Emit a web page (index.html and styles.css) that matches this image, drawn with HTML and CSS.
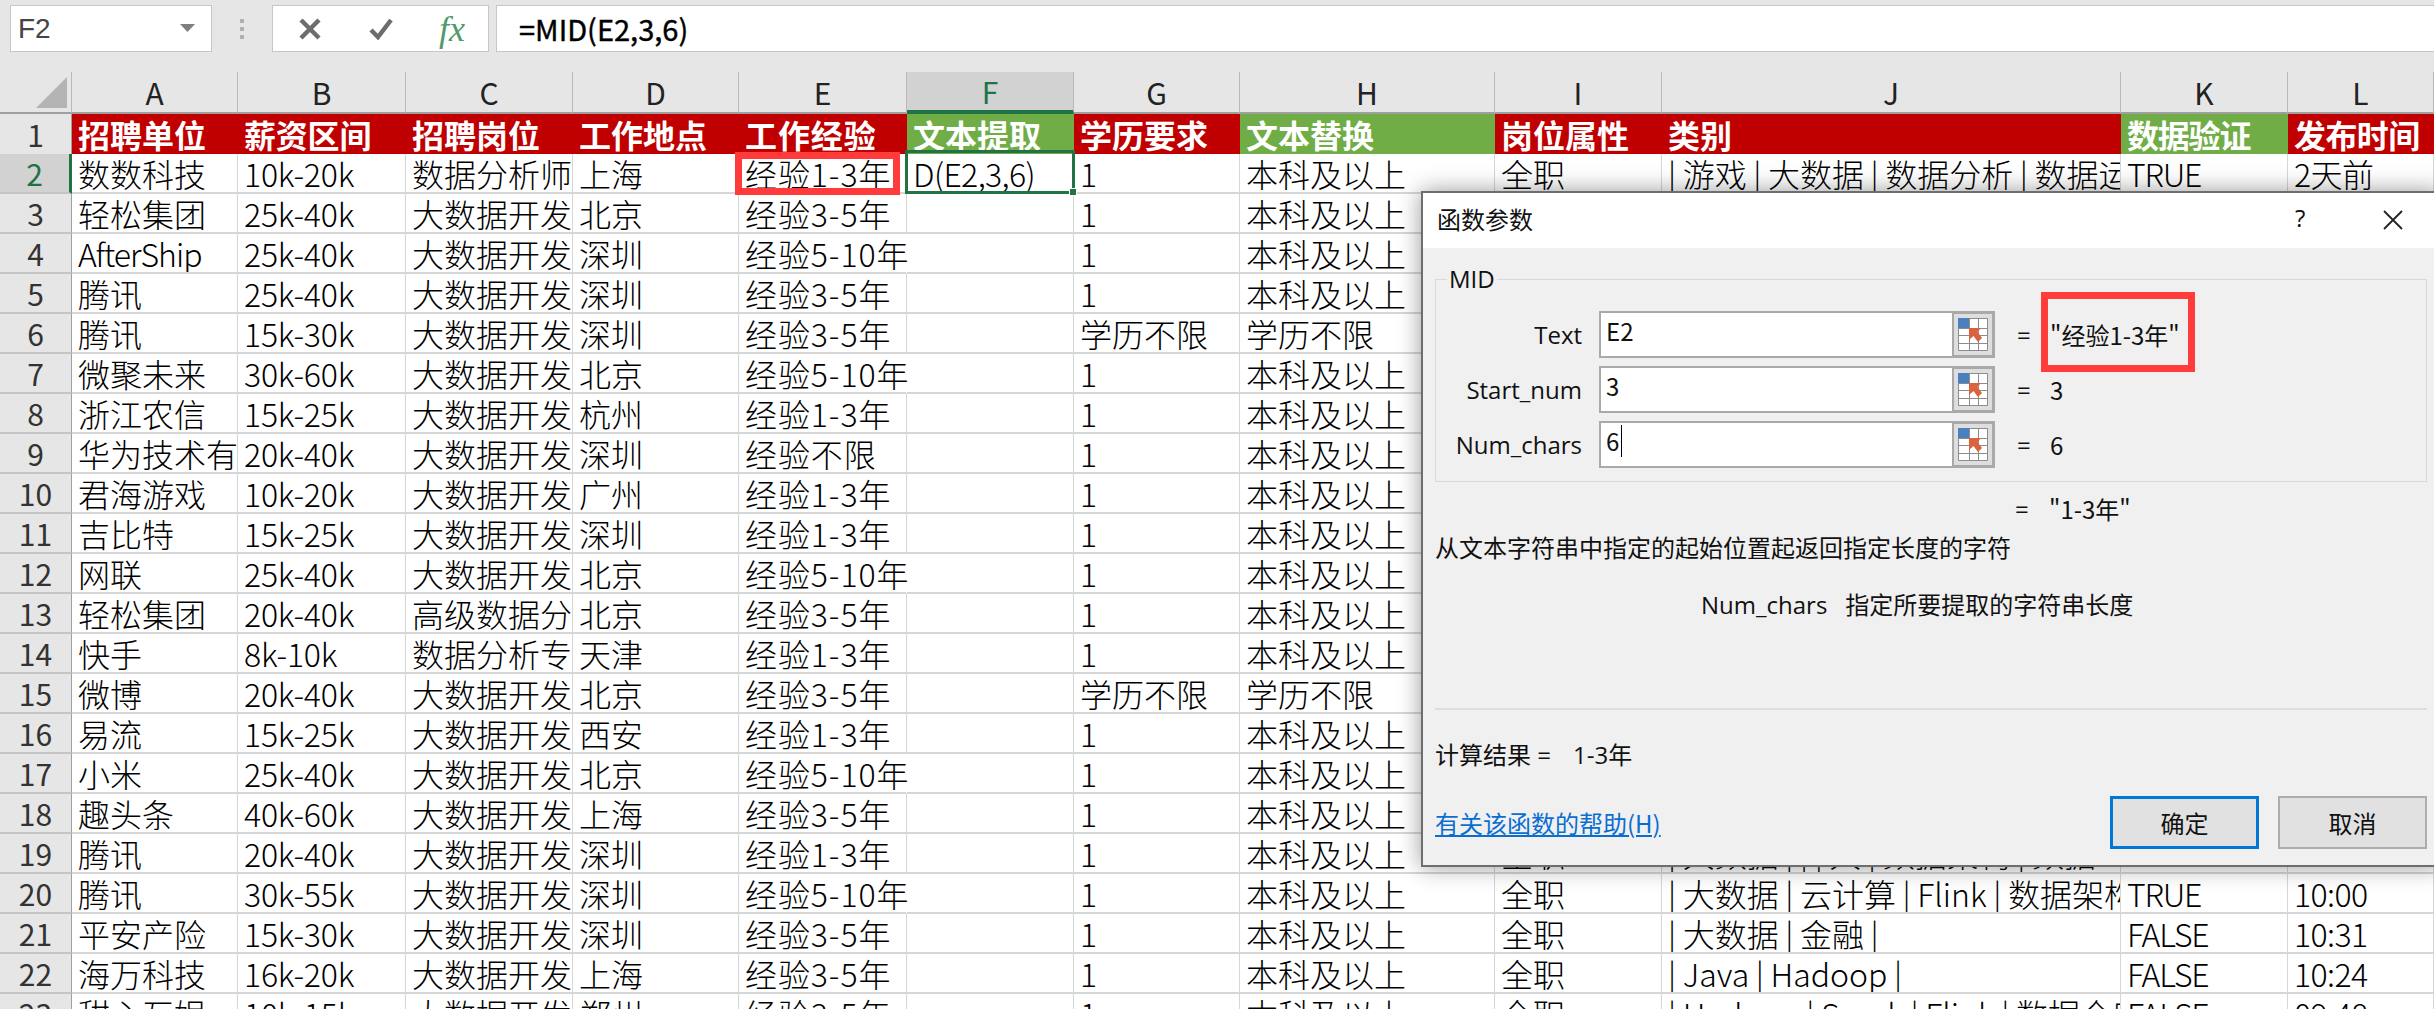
FILE: index.html
```html
<!DOCTYPE html>
<html lang="zh">
<head>
<meta charset="utf-8">
<title>Excel MID</title>
<link rel="stylesheet" href="styles.css">
</head>
<body>
<div class="app">
  <div class="fbar">
    <div class="namebox"><span>F2</span><svg class="caret" width="22" height="12" viewBox="0 0 22 12"><path d="M0 1H15L7.500 9Z" fill="#7f7f7f"/></svg></div>
    <div class="dots"><i></i><i></i><i></i></div>
    <div class="fbtns">
      <svg width="24" height="22" viewBox="0 0 24 22"><path d="M3 2L21 20M21 2L3 20" stroke="#6d6d6d" stroke-width="4.500" fill="none"/></svg>
      <svg width="26" height="22" viewBox="0 0 26 22"><path d="M3 12L10 19L23 2" stroke="#6d6d6d" stroke-width="4.500" fill="none"/></svg>
      <span class="fx">fx</span>
    </div>
    <div class="finput">=MID(E2,3,6)</div>
  </div>
  <div class="sheet">
    <table class="grid">
      <colgroup>
        <col class="w-r"><col class="w-a"><col class="w-b"><col class="w-c"><col class="w-d"><col class="w-e"><col class="w-f"><col class="w-g"><col class="w-h"><col class="w-i"><col class="w-j"><col class="w-k"><col class="w-l">
      </colgroup>
      <thead>
        <tr><th class="corner"><svg class="tri" width="32" height="32" viewBox="0 0 32 32"><path d="M31 0V31H0Z" fill="#b4b4b4"/></svg></th><th>A</th><th>B</th><th>C</th><th>D</th><th>E</th><th class="colsel">F</th><th>G</th><th>H</th><th>I</th><th>J</th><th>K</th><th>L</th></tr>
      </thead>
      <tbody>
        <tr class="hdr"><th>1</th><td>招聘单位</td><td>薪资区间</td><td>招聘岗位</td><td>工作地点</td><td>工作经验</td><td class="gr">文本提取</td><td>学历要求</td><td class="gr">文本替换</td><td>岗位属性</td><td>类别</td><td class="gr">数据验证</td><td>发布时间</td></tr>
        <tr><th class="rowsel">2</th><td>数数科技</td><td>10k-20k</td><td>数据分析师</td><td>上海</td><td>经验1-3年</td><td class="calc">D(E2,3,6)</td><td>1</td><td>本科及以上</td><td>全职</td><td>| 游戏 | 大数据 | 数据分析 | 数据运营 |</td><td>TRUE</td><td>2天前</td></tr>
        <tr><th>3</th><td>轻松集团</td><td>25k-40k</td><td>大数据开发</td><td>北京</td><td>经验3-5年</td><td></td><td>1</td><td>本科及以上</td><td></td><td></td><td></td><td></td></tr>
        <tr><th>4</th><td class="narrow">AfterShip</td><td>25k-40k</td><td>大数据开发</td><td>深圳</td><td class="ov">经验5-10年</td><td></td><td>1</td><td>本科及以上</td><td></td><td></td><td></td><td></td></tr>
        <tr><th>5</th><td>腾讯</td><td>25k-40k</td><td>大数据开发</td><td>深圳</td><td>经验3-5年</td><td></td><td>1</td><td>本科及以上</td><td></td><td></td><td></td><td></td></tr>
        <tr><th>6</th><td>腾讯</td><td>15k-30k</td><td>大数据开发</td><td>深圳</td><td>经验3-5年</td><td></td><td>学历不限</td><td>学历不限</td><td></td><td></td><td></td><td></td></tr>
        <tr><th>7</th><td>微聚未来</td><td>30k-60k</td><td>大数据开发</td><td>北京</td><td class="ov">经验5-10年</td><td></td><td>1</td><td>本科及以上</td><td></td><td></td><td></td><td></td></tr>
        <tr><th>8</th><td>浙江农信</td><td>15k-25k</td><td>大数据开发</td><td>杭州</td><td>经验1-3年</td><td></td><td>1</td><td>本科及以上</td><td></td><td></td><td></td><td></td></tr>
        <tr><th>9</th><td>华为技术有限公司</td><td>20k-40k</td><td>大数据开发</td><td>深圳</td><td>经验不限</td><td></td><td>1</td><td>本科及以上</td><td></td><td></td><td></td><td></td></tr>
        <tr><th>10</th><td>君海游戏</td><td>10k-20k</td><td>大数据开发</td><td>广州</td><td>经验1-3年</td><td></td><td>1</td><td>本科及以上</td><td></td><td></td><td></td><td></td></tr>
        <tr><th>11</th><td>吉比特</td><td>15k-25k</td><td>大数据开发</td><td>深圳</td><td>经验1-3年</td><td></td><td>1</td><td>本科及以上</td><td></td><td></td><td></td><td></td></tr>
        <tr><th>12</th><td>网联</td><td>25k-40k</td><td>大数据开发</td><td>北京</td><td class="ov">经验5-10年</td><td></td><td>1</td><td>本科及以上</td><td></td><td></td><td></td><td></td></tr>
        <tr><th>13</th><td>轻松集团</td><td>20k-40k</td><td>高级数据分析师</td><td>北京</td><td>经验3-5年</td><td></td><td>1</td><td>本科及以上</td><td></td><td></td><td></td><td></td></tr>
        <tr><th>14</th><td>快手</td><td>8k-10k</td><td>数据分析专家</td><td>天津</td><td>经验1-3年</td><td></td><td>1</td><td>本科及以上</td><td></td><td></td><td></td><td></td></tr>
        <tr><th>15</th><td>微博</td><td>20k-40k</td><td>大数据开发</td><td>北京</td><td>经验3-5年</td><td></td><td>学历不限</td><td>学历不限</td><td></td><td></td><td></td><td></td></tr>
        <tr><th>16</th><td>易流</td><td>15k-25k</td><td>大数据开发</td><td>西安</td><td>经验1-3年</td><td></td><td>1</td><td>本科及以上</td><td></td><td></td><td></td><td></td></tr>
        <tr><th>17</th><td>小米</td><td>25k-40k</td><td>大数据开发</td><td>北京</td><td class="ov">经验5-10年</td><td></td><td>1</td><td>本科及以上</td><td></td><td></td><td></td><td></td></tr>
        <tr><th>18</th><td>趣头条</td><td>40k-60k</td><td>大数据开发</td><td>上海</td><td>经验3-5年</td><td></td><td>1</td><td>本科及以上</td><td></td><td></td><td></td><td></td></tr>
        <tr><th>19</th><td>腾讯</td><td>20k-40k</td><td>大数据开发</td><td>深圳</td><td>经验1-3年</td><td></td><td>1</td><td>本科及以上</td><td>全职</td><td>| 大数据 | | | 大 | 数据架构 | 数据</td><td></td><td></td></tr>
        <tr><th>20</th><td>腾讯</td><td>30k-55k</td><td>大数据开发</td><td>深圳</td><td class="ov">经验5-10年</td><td></td><td>1</td><td>本科及以上</td><td>全职</td><td>| 大数据 | 云计算 | Flink | 数据架构师 |</td><td>TRUE</td><td>10:00</td></tr>
        <tr><th>21</th><td>平安产险</td><td>15k-30k</td><td>大数据开发</td><td>深圳</td><td>经验3-5年</td><td></td><td>1</td><td>本科及以上</td><td>全职</td><td>| 大数据 | 金融 |</td><td>FALSE</td><td>10:31</td></tr>
        <tr><th>22</th><td>海万科技</td><td>16k-20k</td><td>大数据开发</td><td>上海</td><td>经验3-5年</td><td></td><td>1</td><td>本科及以上</td><td>全职</td><td>| Java | Hadoop |</td><td>FALSE</td><td>10:24</td></tr>
        <tr><th>23</th><td>甜心互娱</td><td>10k-15k</td><td>大数据开发</td><td>郑州</td><td>经验3-5年</td><td></td><td>1</td><td>本科及以上</td><td>全职</td><td>| Hadoop | Spark | Flink | 数据仓库 |</td><td>FALSE</td><td>09:48</td></tr>
      </tbody>
    </table>
    <div class="redmark"></div>
    <div class="cellsel"><i class="handle"></i></div>
  </div>

  <div class="dialog">
    <div class="dtitle">
      <span>函数参数</span>
      <span class="qm">?</span>
      <svg class="close" width="20" height="20" viewBox="0 0 20 20"><path d="M1 1L19 19M19 1L1 19" stroke="#222" stroke-width="1.800" fill="none"/></svg>
    </div>
    <div class="dbody">
      <fieldset class="group">
        <legend>MID</legend>
        <div class="args">
          <label>Text</label>
          <div class="inp"><span class="val">E2</span><div class="refbtn"><svg width="30" height="33" viewBox="0 0 30 33"><use href="#ref"/></svg></div></div>
          <span class="eq">=</span><span class="res">"经验1-3年"</span>
          <label>Start_num</label>
          <div class="inp"><span class="val">3</span><div class="refbtn"><svg width="30" height="33" viewBox="0 0 30 33"><use href="#ref"/></svg></div></div>
          <span class="eq">=</span><span class="res">3</span>
          <label>Num_chars</label>
          <div class="inp"><span class="val caretline">6</span><div class="refbtn"><svg width="30" height="33" viewBox="0 0 30 33"><use href="#ref"/></svg></div></div>
          <span class="eq">=</span><span class="res">6</span>
        </div>
      </fieldset>
      <div class="total"><span class="eq">=</span><span class="res">"1-3年"</span></div>
      <p class="desc">从文本字符串中指定的起始位置起返回指定长度的字符</p>
      <p class="argdesc"><span>Num_chars</span><span>指定所要提取的字符串长度</span></p>
      <hr class="sep">
      <p class="result"><span>计算结果 =</span><span>1-3年</span></p>
      <div class="dfoot">
        <a class="help">有关该函数的帮助(H)</a>
        <button class="btn primary">确定</button>
        <button class="btn">取消</button>
      </div>
    </div>
    <div class="redbox"></div>
  </div>
</div>
<svg class="defs" width="0" height="0">
  <defs>
    <g id="ref">
      <path d="M.5.5H29.500V32.500H.5ZM.5 10.500H29.500M.5 17.500H29.500M.5 25.500H29.500M11.500.5V32.500M20.500.5V32.500" fill="#fff" stroke="#8c8c8c"/>
      <rect width="11" height="10" fill="#4a80bd"/>
      <path d="M11 10H23L19.500 14L24 20L20 24L15.500 18L11 22Z" fill="#d9623f"/>
    </g>
  </defs>
</svg>
</body>
</html>
```
FILE: styles.css
```css
* { box-sizing: border-box; }
html, body { margin: 0; height: 1009px; overflow: hidden; background: #fff; }
body { font-family: "Noto Sans CJK SC", "Noto Sans", sans-serif; color: #000; }
.app { position: relative; width: 2434px; height: 1009px; overflow: hidden; }

.fbar { height: 72px; background: #e6e6e6; display: flex; align-items: flex-start; padding: 5px 0 0 10px; }
.namebox { width: 202px; height: 47px; background: #fff; border: 1px solid #c6c6c6; display: flex; align-items: center; justify-content: space-between; padding: 0 9px 0 7px; font-size: 28px; color: #444; font-family: "Liberation Sans", sans-serif; }
.dots { width: 60px; height: 47px; display: flex; flex-direction: column; align-items: center; justify-content: center; gap: 4px; }
.dots i { width: 4px; height: 4px; background: #b0b0b0; }
.fbtns { width: 217px; height: 47px; background: #fff; border: 1px solid #c6c6c6; display: flex; align-items: center; padding: 0 23px 0 25px; justify-content: space-between; }
.fx { font-family: "Liberation Serif", serif; font-style: italic; font-size: 36px; color: #4f9b6b; line-height: 40px; }
.finput { flex: 1; height: 47px; margin-left: 7px; background: #fff; border-top: 1px solid #c6c6c6; border-bottom: 1px solid #c6c6c6; border-left: 1px solid #c6c6c6; padding-left: 22px; font-size: 29px; line-height: 44px; font-family: "Noto Sans CJK SC", sans-serif; -webkit-text-stroke: .4px #000; }

.sheet { position: relative; width: 2434px; }
.grid { table-layout: fixed; border-collapse: separate; border-spacing: 0; width: 2434px; }
.w-r { width: 72px; } .w-a { width: 166px; } .w-b { width: 168px; } .w-c { width: 167px; } .w-d { width: 166px; }
.w-e { width: 168px; } .w-f { width: 167px; } .w-g { width: 166px; } .w-h { width: 255px; } .w-i { width: 167px; }
.w-j { width: 459px; } .w-k { width: 167px; } .w-l { width: 146px; }

.grid th, .grid td { height: 40px; padding: 0; font-weight: 400; white-space: nowrap; overflow: hidden; }
.grid td { font-size: 32px; font-weight: 300; line-height: 38px; padding: 0 0 0 6px; border-right: 1px solid #d6d6d6; border-bottom: 2px solid #d6d6d6; }
.grid td.ov { overflow: visible; border-right-color: transparent; }
.grid td.narrow { letter-spacing: -1px; }
.grid tbody td:nth-child(3) { letter-spacing: -.2px; }
.grid tbody td:nth-child(6) { letter-spacing: .9px; }
.grid tbody td.calc { letter-spacing: -.6px; }
.grid tbody td:nth-child(11) { word-spacing: -.5px; }
.grid tbody td:nth-child(12) { letter-spacing: -1.200px; }
.grid tbody td:nth-child(13) { letter-spacing: -.6px; }
.grid th { background: #e6e6e6; font-size: 30px; color: #333; text-align: center; line-height: 38px; border-right: 1px solid #b9b9b9; }
.grid thead th { border-bottom: 2px solid #9f9f9f; color: #222; }
.grid tbody th { border-bottom: 2px solid #c4c4c4; border-right: 1px solid #9f9f9f; }
.corner { position: relative; }
.tri { display: block; position: absolute; right: 3px; top: 5px; }
.colsel { background: #d2d2d2 !important; color: #217346 !important; border-bottom: 4px solid #217346 !important; }
.rowsel { background: #d2d2d2 !important; color: #217346 !important; border-right: 3px solid #217346 !important; }
.grid .hdr td { background: #c00000; color: #fff; font-weight: 700; border-right: 0; border-bottom: 0; line-height: 40px; letter-spacing: 0; word-spacing: 0; }
.grid .hdr td.gr { background: #70ad47; }
.hdr th { border-bottom: 0 !important; line-height: 40px; }

.redmark { position: absolute; left: 735px; top: 80px; width: 165px; height: 43px; border: 7px solid #ff3b3b; }
.cellsel { position: absolute; left: 905px; top: 78px; width: 170px; height: 44px; border: 3px solid #217346; }
.handle { position: absolute; right: -5px; bottom: -5px; width: 8px; height: 8px; background: #217346; border: 1px solid #fff; }

.dialog { position: absolute; left: 1421px; top: 191px; width: 1020px; height: 676px; background: #f0f0f0; border: 2px solid #6e6e6e; box-shadow: 0 0 22px rgba(0,0,0,.4); font-family: "Open Sans", "Noto Sans CJK SC", sans-serif; font-size: 24px; color: #111; }
.dtitle { height: 55px; background: #fff; display: flex; align-items: center; padding: 0 0 4px 14px; position: relative; }
.qm { position: absolute; left: 872px; top: 8px; }
.close { position: absolute; left: 960px; top: 17px; }
.dbody { padding: 0 12px; }
.group { margin: 16px 0 0; padding: 0 0 12px 0; height: 218px; border: 1px solid #d8d8d8; width: 992px; }
.group legend { margin-left: 11px; padding: 0 2px; line-height: 30px; }
.args { display: grid; grid-template-columns: 146px 413px 50px auto; row-gap: 8px; margin-top: 17px; align-items: center; }
.args label { text-align: right; }
.inp { margin-left: 17px; width: 396px; height: 47px; background: #fff; border: 2px solid #a9a9a9; display: flex; justify-content: space-between; }
.val { padding: 0 0 0 5px; line-height: 36px; height: 36px; font-family: "Noto Sans CJK SC", sans-serif; }
.caretline::after { content: ""; display: inline-block; width: 1px; height: 32px; margin: 2px 0 0 2px; background: #000; vertical-align: top; }
.refbtn { width: 43px; height: 47px; margin: -2px -2px 0 0; background: #dedede; border: 3px solid #a9a9a9; border-left-width: 2px; display: flex; align-items: center; justify-content: center; }
.refbtn svg { display: block; }
.eq { margin-left: 22px; font-size: 24px; }
.args .res { margin-left: 5px; white-space: nowrap; font-family: "Noto Sans CJK SC", sans-serif; }
.total { margin-top: 10px; padding-left: 580px; display: flex; height: 34px; line-height: 34px; }
.total .eq { margin: 0; width: 34px; }
.total .res { font-family: "Noto Sans CJK SC", sans-serif; }
.desc { margin: 3px 0 0; height: 36px; line-height: 36px; font-family: "Noto Sans CJK SC", sans-serif; }
.argdesc { margin: 22px 0 0 266px; height: 36px; line-height: 36px; display: flex; gap: 18px; }
.sep { margin: 85px 0 0; border: 0; height: 2px; background: #dedede; width: 992px; }
.result { margin: 28px 0 0; display: flex; gap: 22px; height: 34px; line-height: 34px; }
.dfoot { margin-top: 24px; display: flex; align-items: center; width: 992px; }
.help { color: #0a6ed1; text-decoration: underline; margin-right: auto; line-height: 34px; font-family: "Noto Sans CJK SC", sans-serif; }
.btn { width: 149px; height: 53px; margin-left: 19px; background: #e1e1e1; border: 2px solid #adadad; font: inherit; color: #111; padding: 0; }
.btn.primary { border: 3px solid #0078d7; }
.redbox { position: absolute; left: 618px; top: 99px; width: 154px; height: 80px; border: 7px solid #ff3b3b; }
.defs { position: absolute; }
```
